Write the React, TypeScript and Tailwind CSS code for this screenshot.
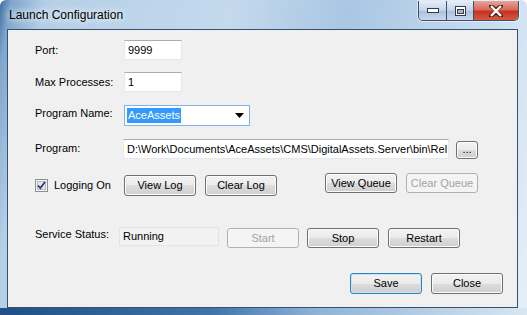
import React from 'react';

const font = { fontFamily: '"Liberation Sans", Arial, sans-serif' };

function Btn({ label, w = 'w-[72px]', h = 'h-[21px]', disabled = false, primary = false, className = '' }: { label: string; w?: string; h?: string; disabled?: boolean; primary?: boolean; className?: string }) {
  const base = 'flex items-center justify-center rounded-[3px] text-[11px] shrink-0';
  if (disabled) {
    return <div className={`${base} ${w} ${h} ${className} border border-[#adb2b5] bg-[#f4f4f4] text-[#a3a3a3]`}>{label}</div>;
  }
  return (
    <div
      className={`${base} ${w} ${h} ${className} border ${primary ? 'border-[#3c7fb1] shadow-[inset_0_0_0_1px_#bde6fd]' : 'border-[#707070] shadow-[inset_0_0_0_1px_#fcfcfc]'} bg-[linear-gradient(#f2f2f2_0%,#ebebeb_50%,#dddddd_50%,#cfcfcf_100%)] text-black`}
    >
      {label}
    </div>
  );
}

function TextBox({ value, w, h = 'h-[20px]', className = '' }: { value: string; w: string; h?: string; className?: string }) {
  return (
    <div className={`${w} ${h} ${className} shrink-0 flex items-center pl-[3px] bg-white border border-[#e3e9ef] border-t-[#abadb3] text-[11px] text-black overflow-hidden whitespace-nowrap`}>
      {value}
    </div>
  );
}

function CaptionButtons() {
  return (
    <div className="flex h-[20px] mt-[1px] mr-[8px] rounded-b-[5px] border border-t-0 border-[#3b4e6b] overflow-hidden shadow-[0_0_0_1px_rgba(255,255,255,0.5)]">
      <div className="w-[28px] flex items-center justify-center border-r border-[#3b4e6b] bg-[linear-gradient(#e6eef8,#c3d3ea_50%,#a9bedd_51%,#c9d8ee)]">
        <svg width="12" height="6" viewBox="0 0 12 6">
          <rect x="0.5" y="0.5" width="11" height="4" fill="#fff" stroke="#333b48" />
        </svg>
      </div>
      <div className="w-[27px] flex items-center justify-center border-r border-[#3b4e6b] bg-[linear-gradient(#e6eef8,#c3d3ea_50%,#a9bedd_51%,#c9d8ee)]">
        <svg width="11" height="10" viewBox="0 0 11 10">
          <rect x="0.5" y="0.5" width="10" height="9" fill="#fff" stroke="#333b48" />
          <rect x="2.5" y="3.5" width="6" height="4" fill="#aab8cc" stroke="#333b48" />
        </svg>
      </div>
      <div className="w-[44px] flex items-center justify-center bg-[linear-gradient(#e8a598,#d86a5a_45%,#c7321f_55%,#d35a3f)]">
        <svg width="14" height="12" viewBox="0 0 14 12">
          <path d="M2 1 L7 5 L12 1 M2 11 L7 7 L12 11" stroke="#3a2020" strokeWidth="4" fill="none" strokeLinecap="round" />
          <path d="M2 1 L12 11 M12 1 L2 11" stroke="#fff" strokeWidth="2.4" fill="none" />
        </svg>
      </div>
    </div>
  );
}

export default function App() {
  return (
    <div
      style={font}
      className="w-[527px] h-[315px] overflow-hidden flex flex-col bg-[linear-gradient(100deg,#3f6f9f_0%,#7fa6cc_2%,#b5cfe7_8%,#c4d9ec_40%,#a9c6e3_60%,#c8dcee_85%,#e6eff7_100%)] rounded-t-[6px]"
    >
      {/* title bar */}
      <div className="h-[29px] flex items-start justify-between shrink-0">
        <div className="ml-[9px] mt-[6px] text-[12px] text-black [text-shadow:0_0_6px_#f0f6fb,0_0_10px_#f0f6fb]">
          Launch Configuration
        </div>
        <CaptionButtons />
      </div>

      {/* client area */}
      <div className="ml-[7px] w-[511px] h-[279px] shrink-0 border border-[#36516f] bg-[#f0f0f0] text-[11px] text-black flex flex-col pl-[27px]">
        <div className="flex items-center h-[20px] mt-[10px]">
          <div className="w-[89px]">Port:</div>
          <TextBox value="9999" w="w-[58px]" />
        </div>

        <div className="flex items-center h-[20px] mt-[12px]">
          <div className="w-[89px]">Max Processes:</div>
          <TextBox value="1" w="w-[58px]" />
        </div>

        <div className="flex items-center h-[21px] mt-[13px]">
          <div className="w-[89px] -mt-[4px]">Program Name:</div>
          <div className="w-[126px] h-[21px] flex items-center justify-between bg-white border border-[#7eb4ea] pl-[2px] pr-[5px]">
            <span className="bg-[#3399ff] text-white px-[1px] leading-[15px]">AceAssets</span>
            <svg width="9" height="5" viewBox="0 0 9 5">
              <path d="M0 0 H9 L4.5 5 Z" fill="#000" />
            </svg>
          </div>
        </div>

        <div className="flex items-center h-[20px] mt-[13px]">
          <div className="w-[88px] -mt-[2px]">Program:</div>
          <TextBox value="D:\Work\Documents\AceAssets\CMS\DigitalAssets.Server\bin\Rel" w="w-[326px]" />
          <Btn label="..." w="w-[22px]" h="h-[18px]" className="ml-[7px] mt-[1px]" />
        </div>

        <div className="flex items-start h-[23px] mt-[14px]">
          <div className="w-[89px] flex items-center h-[21px] mt-[2px]">
            <svg width="13" height="13" viewBox="0 0 13 13" className="shrink-0">
              <rect x="0.5" y="0.5" width="12" height="12" fill="#f4f4f4" stroke="#8e8f8f" />
              <rect x="2.5" y="2.5" width="8" height="8" fill="#e4e6e9" stroke="#b9bcc1" />
              <path d="M3 6.5 L5.3 9 L10 3" stroke="#2a3c7a" strokeWidth="1.8" fill="none" />
            </svg>
            <span className="ml-[6px]">Logging On</span>
          </div>
          <Btn label="View Log" className="mt-[2px]" />
          <Btn label="Clear Log" className="ml-[9px] mt-[2px]" />
          <Btn label="View Queue" h="h-[20px]" className="ml-[48px]" />
          <Btn label="Clear Queue" h="h-[20px]" disabled className="ml-[9px]" />
        </div>

        <div className="flex items-start h-[21px] mt-[31px]">
          <div className="w-[84px] h-[19px] flex items-center -mt-[2px]">Service Status:</div>
          <div className="w-[100px] h-[19px] flex items-center pl-[3px] bg-[#f2f2f2] border border-[#e2e3ea] shrink-0">
            Running
          </div>
          <Btn label="Start" h="h-[20px]" disabled className="ml-[8px] mt-[1px]" />
          <Btn label="Stop" h="h-[20px]" className="ml-[8px] mt-[1px]" />
          <Btn label="Restart" h="h-[20px]" className="ml-[9px] mt-[1px]" />
        </div>

        <div className="flex justify-end gap-[9px] pr-[14px] mt-[25px]">
          <Btn label="Save" primary />
          <Btn label="Close" />
        </div>
      </div>

      {/* bottom frame edge */}
      <div className="flex-1 bg-[linear-gradient(90deg,#1f4f86_0%,#3f73aa_40%,#8fb3d6_60%,#d9e6f2_100%)]" />
    </div>
  );
}
